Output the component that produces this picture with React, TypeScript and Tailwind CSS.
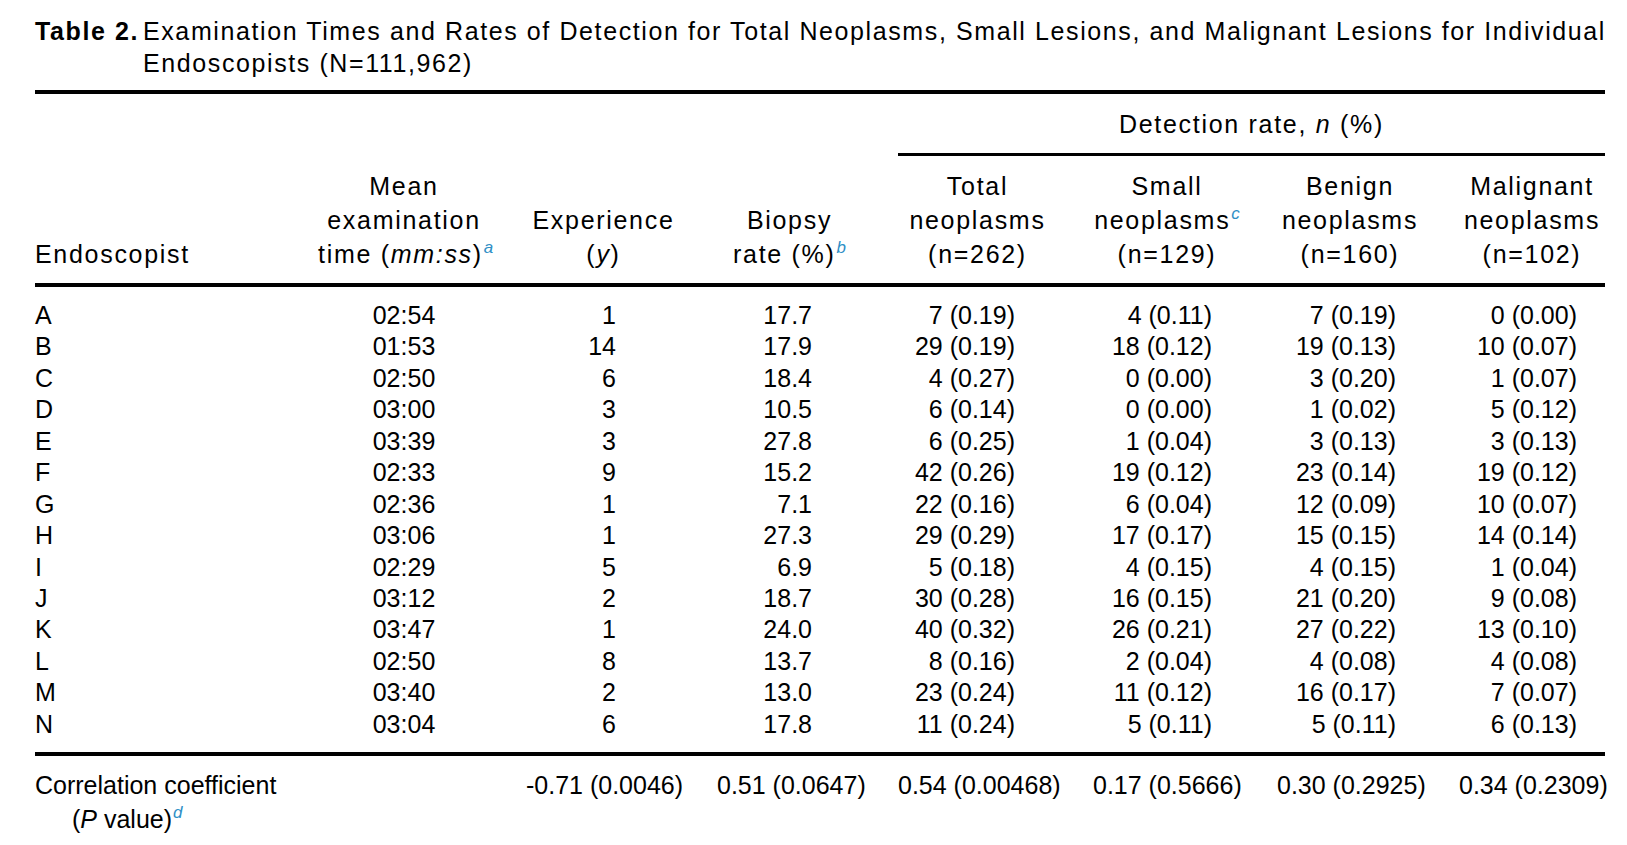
import React from "react";

const rows: string[][] = [
  ["A", "02:54", "1", "17.7", "7 (0.19)", "4 (0.11)", "7 (0.19)", "0 (0.00)"],
  ["B", "01:53", "14", "17.9", "29 (0.19)", "18 (0.12)", "19 (0.13)", "10 (0.07)"],
  ["C", "02:50", "6", "18.4", "4 (0.27)", "0 (0.00)", "3 (0.20)", "1 (0.07)"],
  ["D", "03:00", "3", "10.5", "6 (0.14)", "0 (0.00)", "1 (0.02)", "5 (0.12)"],
  ["E", "03:39", "3", "27.8", "6 (0.25)", "1 (0.04)", "3 (0.13)", "3 (0.13)"],
  ["F", "02:33", "9", "15.2", "42 (0.26)", "19 (0.12)", "23 (0.14)", "19 (0.12)"],
  ["G", "02:36", "1", "7.1", "22 (0.16)", "6 (0.04)", "12 (0.09)", "10 (0.07)"],
  ["H", "03:06", "1", "27.3", "29 (0.29)", "17 (0.17)", "15 (0.15)", "14 (0.14)"],
  ["I", "02:29", "5", "6.9", "5 (0.18)", "4 (0.15)", "4 (0.15)", "1 (0.04)"],
  ["J", "03:12", "2", "18.7", "30 (0.28)", "16 (0.15)", "21 (0.20)", "9 (0.08)"],
  ["K", "03:47", "1", "24.0", "40 (0.32)", "26 (0.21)", "27 (0.22)", "13 (0.10)"],
  ["L", "02:50", "8", "13.7", "8 (0.16)", "2 (0.04)", "4 (0.08)", "4 (0.08)"],
  ["M", "03:40", "2", "13.0", "23 (0.24)", "11 (0.12)", "16 (0.17)", "7 (0.07)"],
  ["N", "03:04", "6", "17.8", "11 (0.24)", "5 (0.11)", "5 (0.11)", "6 (0.13)"],
];

const dataCls = [
  "text-left",
  "text-center",
  "text-right pr-[83px]",
  "text-right pr-[68px]",
  "text-right pr-[60px]",
  "text-right pr-[47px]",
  "text-right pr-[45px]",
  "text-right pr-[28px]",
];

const corr = [
  "-0.71 (0.0046)",
  "0.51 (0.0647)",
  "0.54 (0.00468)",
  "0.17 (0.5666)",
  "0.30 (0.2925)",
  "0.34 (0.2309)",
];

const GRID =
  "grid grid-cols-[265px_208px_191px_181px_195px_184px_182px_164px]";

function Sup({ children }: { children: React.ReactNode }) {
  return (
    <span className="relative -top-[10px] ml-[1px] inline-block align-baseline text-[17px] leading-none italic tracking-normal text-[#2f8fc6]">
      {children}
    </span>
  );
}

function HeadCell({
  lines,
  last,
}: {
  lines: React.ReactNode[];
  last?: boolean;
}) {
  return (
    <div
      className={
        "flex flex-col justify-end text-center tracking-[1.7px] " +
        (last ? "pl-[18px]" : "px-[18px]")
      }
    >
      {lines.map((l, i) => (
        <div key={i} className="h-[34px] leading-[34px] whitespace-nowrap">
          {l}
        </div>
      ))}
    </div>
  );
}

export default function App() {
  return (
    <div
      className="min-h-[845px] w-[1627px] bg-white text-black text-[25px]"
      style={{ fontFamily: '"Liberation Sans", Arial, sans-serif' }}
    >
      <div className="pl-[35px] w-[1605px]">
        {/* Title */}
        <div className="flex pt-[15px] leading-[32px] whitespace-nowrap tracking-[1.6px]">
          <div className="w-[108px] shrink-0 font-bold">Table 2.</div>
          <div>
            Examination Times and Rates of Detection for Total Neoplasms, Small
            Lesions, and Malignant Lesions for Individual
            <br />
            Endoscopists (N=111,962)
          </div>
        </div>

        {/* Top rule */}
        <div className="mt-[11px] h-[4px] bg-black" />

        {/* Header */}
        <div className={GRID}>
          <div className="col-span-4" />
          <div className="col-span-4 pl-[18px]">
            <div className="pt-[14px] pb-[13px] text-center leading-[32px] tracking-[1.7px]">
              Detection rate, <i>n</i> (%)
            </div>
            <div className="h-[3px] bg-black" />
          </div>
        </div>
        <div className={GRID + " pt-[13px] pb-[12px]"}>
          <div className="flex flex-col justify-end tracking-[1.7px]">
            <div className="h-[34px] leading-[34px]">Endoscopist</div>
          </div>
          <HeadCell
            lines={[
              "Mean",
              "examination",
              <>
                time (<i>mm:ss</i>)<Sup>a</Sup>
              </>,
            ]}
          />
          <HeadCell
            lines={[
              "Experience",
              <>
                (<i>y</i>)
              </>,
            ]}
          />
          <HeadCell
            lines={[
              "Biopsy",
              <>
                rate (%)<Sup>b</Sup>
              </>,
            ]}
          />
          <HeadCell lines={["Total", "neoplasms", "(n=262)"]} />
          <HeadCell
            lines={[
              "Small",
              <>
                neoplasms<Sup>c</Sup>
              </>,
              "(n=129)",
            ]}
          />
          <HeadCell lines={["Benign", "neoplasms", "(n=160)"]} />
          <HeadCell lines={["Malignant", "neoplasms", "(n=102)"]} last />
        </div>
        <div className="h-[4px] bg-black" />

        {/* Body */}
        <div className="pt-[13px] pb-[12px]">
          {rows.map((r, i) => (
            <div key={i} className={GRID + " h-[31.45px] leading-[31.45px]"}>
              {r.map((c, j) => (
                <div key={j} className={"whitespace-nowrap " + dataCls[j]}>
                  {c}
                </div>
              ))}
            </div>
          ))}
        </div>
        <div className="h-[4px] bg-black" />

        {/* Correlation */}
        <div className={GRID + " pt-[13px]"}>
          <div className="leading-[33.5px] whitespace-nowrap">
            <div>Correlation coefficient</div>
            <div className="pl-[37px]">
              (<i>P</i> value)<Sup>d</Sup>
            </div>
          </div>
          <div />
          {corr.map((c, i) => (
            <div
              key={i}
              className={
                "leading-[33.5px] text-center whitespace-nowrap " +
                (i === corr.length - 1 ? "pl-[18px]" : "px-[18px]")
              }
            >
              {c}
            </div>
          ))}
        </div>
      </div>
    </div>
  );
}
